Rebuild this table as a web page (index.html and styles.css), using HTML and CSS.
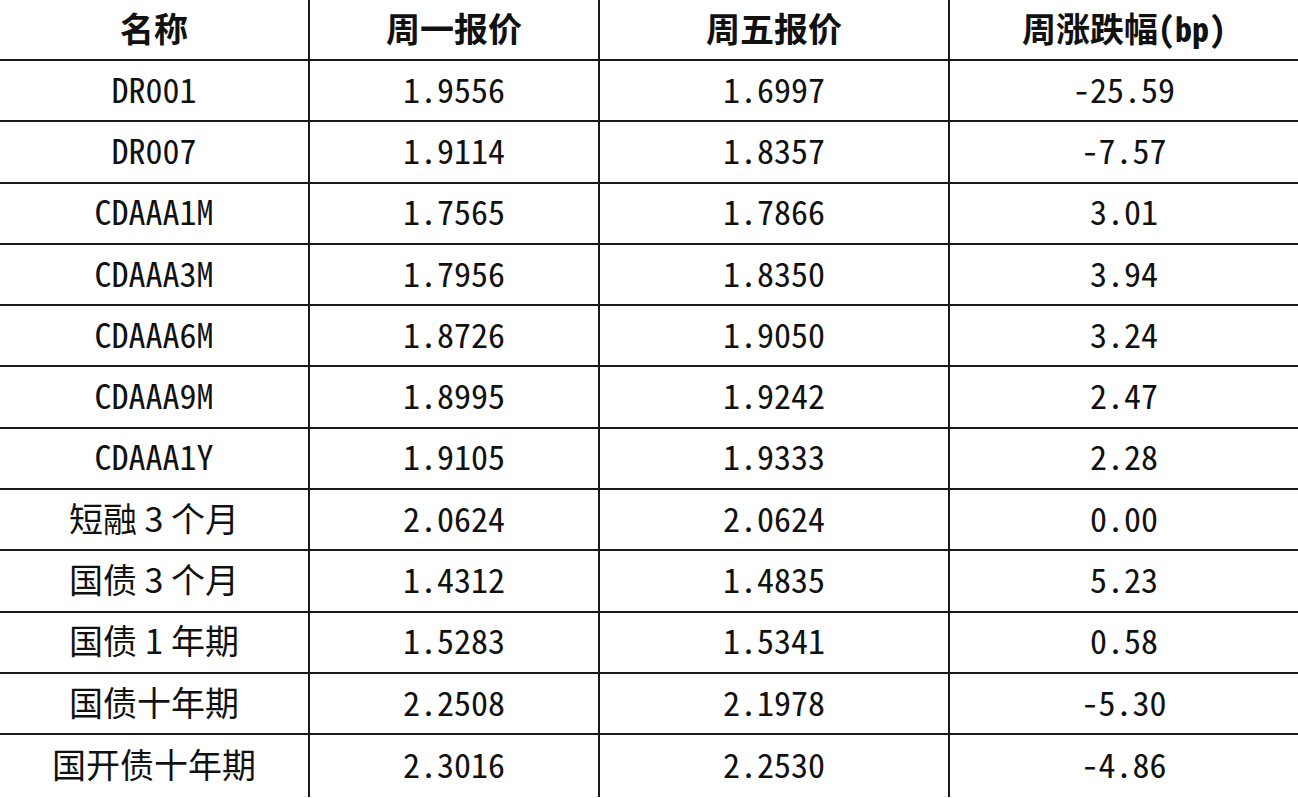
FILE: index.html
```html
<!DOCTYPE html>
<html lang="zh-CN">
<head>
<meta charset="utf-8">
<title>报价</title>
<link rel="stylesheet" href="styles.css">
</head>
<body>
<div class="table">
  <div class="row head">
    <div class="cell">名称</div>
    <div class="cell">周一报价</div>
    <div class="cell">周五报价</div>
    <div class="cell">周涨跌幅(bp)</div>
  </div>
  <div class="row"><div class="cell">DR001</div><div class="cell">1.9556</div><div class="cell">1.6997</div><div class="cell">-25.59</div></div>
  <div class="row"><div class="cell">DR007</div><div class="cell">1.9114</div><div class="cell">1.8357</div><div class="cell">-7.57</div></div>
  <div class="row"><div class="cell">CDAAA1M</div><div class="cell">1.7565</div><div class="cell">1.7866</div><div class="cell">3.01</div></div>
  <div class="row"><div class="cell">CDAAA3M</div><div class="cell">1.7956</div><div class="cell">1.8350</div><div class="cell">3.94</div></div>
  <div class="row"><div class="cell">CDAAA6M</div><div class="cell">1.8726</div><div class="cell">1.9050</div><div class="cell">3.24</div></div>
  <div class="row"><div class="cell">CDAAA9M</div><div class="cell">1.8995</div><div class="cell">1.9242</div><div class="cell">2.47</div></div>
  <div class="row"><div class="cell">CDAAA1Y</div><div class="cell">1.9105</div><div class="cell">1.9333</div><div class="cell">2.28</div></div>
  <div class="row"><div class="cell cn">短融 3 个月</div><div class="cell">2.0624</div><div class="cell">2.0624</div><div class="cell">0.00</div></div>
  <div class="row"><div class="cell cn">国债 3 个月</div><div class="cell">1.4312</div><div class="cell">1.4835</div><div class="cell">5.23</div></div>
  <div class="row"><div class="cell cn">国债 1 年期</div><div class="cell">1.5283</div><div class="cell">1.5341</div><div class="cell">0.58</div></div>
  <div class="row"><div class="cell cn">国债十年期</div><div class="cell">2.2508</div><div class="cell">2.1978</div><div class="cell">-5.30</div></div>
  <div class="row"><div class="cell cn">国开债十年期</div><div class="cell">2.3016</div><div class="cell">2.2530</div><div class="cell">-4.86</div></div>
</div>
</body>
</html>
```

FILE: styles.css
```css
html, body {
  margin: 0;
  padding: 0;
  background: #ffffff;
}
body {
  width: 1298px;
  height: 798px;
  overflow: hidden;
  font-family: "Noto Sans CJK SC", "Noto Sans", sans-serif;
  font-size: 34px;
  color: #111111;
  font-feature-settings: "hwid" 1;
}
.table {
  display: flex;
  flex-direction: column;
  width: 1298px;
}
.row {
  display: grid;
  grid-template-columns: 310px 290px 350px 348px;
  height: 61.3px;
  box-sizing: border-box;
  border-bottom: 2px solid #1a1a1a;
}
.row.head {
  height: 61px;
  font-weight: 700;
}
.row:last-child {
  border-bottom: none;
}
.cell {
  display: flex;
  align-items: center;
  justify-content: center;
  box-sizing: border-box;
  padding-bottom: 4px;
  border-right: 2px solid #1a1a1a;
  line-height: 1;
  white-space: pre;
}
.cell:last-child {
  border-right: none;
}
.cell.cn {
  font-feature-settings: normal;
}
```
